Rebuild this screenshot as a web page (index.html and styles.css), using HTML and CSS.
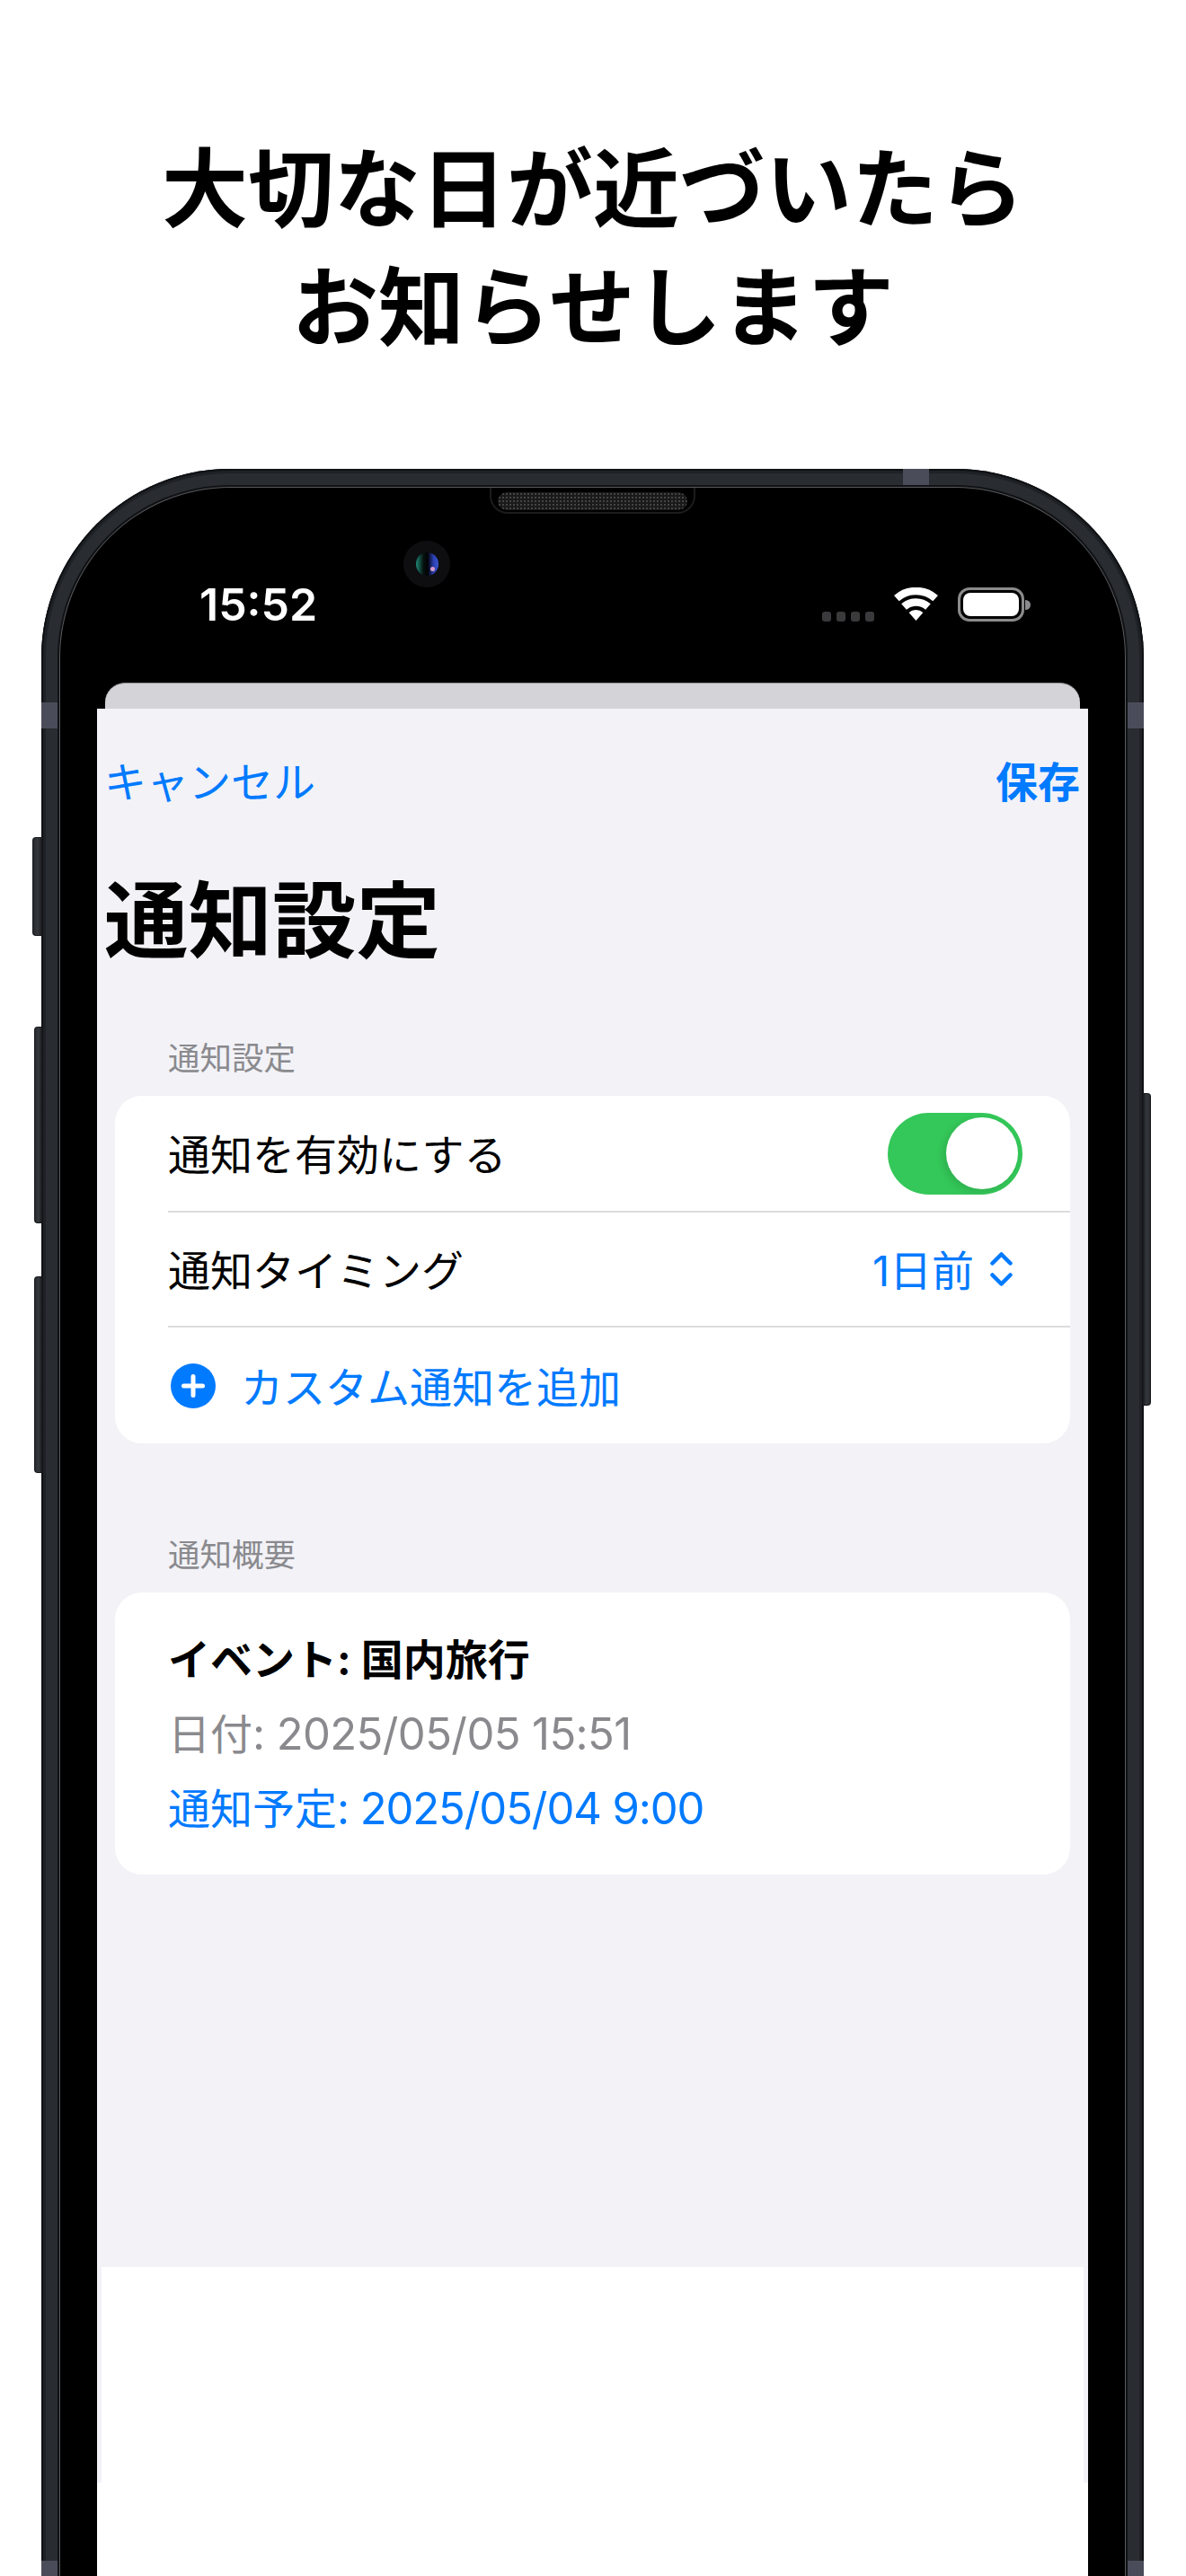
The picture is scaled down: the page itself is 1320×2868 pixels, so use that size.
FILE: index.html
```html
<!DOCTYPE html>
<html lang="ja">
<head>
<meta charset="utf-8">
<title>通知設定</title>
<link rel="stylesheet" href="styles.css">
</head>
<body>
<header class="headline">
  <h1 class="headline-text">大切な日が近づいたら<br>お知らせします</h1>
</header>
<div class="phone">
  <span class="side-btn btn-action"></span>
  <span class="side-btn btn-vol-up"></span>
  <span class="side-btn btn-vol-down"></span>
  <span class="side-btn btn-power"></span>
  <span class="band band-top"></span>
  <span class="band band-left"></span>
  <span class="band band-right"></span>
  <span class="band band-bottom-left"></span>
  <span class="band band-bottom-right"></span>
  <div class="bezel">
    <div class="notch"><div class="speaker"></div></div>
    <div class="camera"><div class="lens"></div></div>
    <div class="status-bar">
      <span class="time">15:52</span>
      <div class="status-icons">
        <div class="signal"><i></i><i></i><i></i><i></i></div>
        <svg class="wifi" width="49" height="38" viewBox="0 0 49 38">
          <path class="wifi-arc" d="M2.85 12.1A33 33 0 0 1 46.15 12.1"/>
          <path class="wifi-arc" d="M11.05 21.5A20.5 20.5 0 0 1 37.95 21.5"/>
          <path class="wifi-core" d="M24.5 37L16.6 27.9A12 12 0 0 1 32.4 27.9Z"/>
        </svg>
        <div class="battery"><div class="battery-fill"></div></div>
      </div>
    </div>
    <div class="back-sheet"></div>
    <main class="screen">
      <div class="sheet">
        <nav class="nav">
          <span class="nav-cancel">キャンセル</span>
          <span class="nav-save">保存</span>
        </nav>
        <h2 class="title">通知設定</h2>
        <div class="section-label">通知設定</div>
        <section class="card">
          <div class="row row-first">
            <span class="row-text">通知を有効にする</span>
            <div class="toggle"><div class="knob"></div></div>
          </div>
          <div class="row row-second">
            <span class="row-text">通知タイミング</span>
            <div class="picker">
              <span class="row-text">1日前</span>
              <svg class="chevrons" width="25" height="38" viewBox="0 0 25 38">
                <path d="M2.5 12.5L12.5 2.5L22.5 12.5"/>
                <path d="M2.5 25.5L12.5 35.5L22.5 25.5"/>
              </svg>
            </div>
          </div>
          <div class="row row-add">
            <svg class="plus" width="50" height="50" viewBox="0 0 50 50">
              <circle class="plus-disc" cx="25" cy="25" r="25"/>
              <path class="plus-mark" d="M25 14.5V35.5M14.5 25H35.5"/>
            </svg>
            <span class="row-text add-text">カスタム通知を追加</span>
          </div>
        </section>
        <div class="section-label section-label-2">通知概要</div>
        <section class="card summary">
          <div class="sum-line sum-event">イベント: 国内旅行</div>
          <div class="sum-line sum-date">日付<span class="num">: 2025/05/05 15:51</span></div>
          <div class="sum-line sum-plan">通知予定<span class="num">: 2025/05/04 9:00</span></div>
        </section>
        <div class="blank"></div>
      </div>
    </main>
  </div>
</div>
</body>
</html>
```

FILE: styles.css
```css
* { box-sizing: border-box; }
html, body { margin: 0; padding: 0; }
body {
  width: 1320px;
  height: 2868px;
  overflow: hidden;
  background: #fff;
  color: #000;
  font-family: Inter, "Noto Sans CJK JP", sans-serif;
}

.headline { padding-top: 138px; text-align: center; }
.headline-text {
  margin: 0;
  font-size: 96px;
  line-height: 132px;
  font-weight: 700;
  font-family: "Noto Sans CJK JP", sans-serif;
}

.phone {
  position: relative;
  width: 1227px;
  height: 2346px;
  margin: 120px 0 0 46px;
  padding: 21px 21px 0;
  border-radius: 210px 210px 0 0;
  background: #292c30;
  box-shadow: inset 0 0 0 2px #101215, inset 0 0 0 5px #1e2125;
}
.side-btn {
  position: absolute;
  background: linear-gradient(90deg, #26292d, #35383c 50%, #17191c);
  border: 1px solid #16181b;
  border-right: 0;
  border-radius: 4px 0 0 4px;
}
.btn-action { left: -10px; top: 410px; width: 11px; height: 110px; }
.btn-vol-up { left: -8px; top: 621px; width: 9px; height: 219px; }
.btn-vol-down { left: -8px; top: 899px; width: 9px; height: 219px; }
.btn-power {
  left: 1226px; top: 695px; width: 9px; height: 348px;
  border: 1px solid #16181b; border-left: 0;
  border-radius: 0 4px 4px 0;
  background: linear-gradient(90deg, #17191c, #35383c 50%, #26292d);
}
.band { position: absolute; background: #4a4c5a; }
.band-top { left: 959px; top: 0; width: 29px; height: 21px; }
.band-left { left: 0; top: 260px; width: 21px; height: 29px; }
.band-right { right: 0; top: 260px; width: 21px; height: 29px; }
.band-bottom-left { left: 0; top: 2329px; width: 21px; height: 17px; }
.band-bottom-right { right: 0; top: 2329px; width: 21px; height: 17px; }

.bezel {
  position: relative;
  height: 2325px;
  padding: 0 41px;
  background: #000;
  border-radius: 189px 189px 0 0;
  box-shadow: 0 0 0 1px #58595b, 0 0 0 3px #101215;
}
.notch {
  position: absolute;
  left: 478px; top: 0;
  width: 229px; height: 29px;
  padding: 5px 7px 0;
  border: 2px solid #1c1c1e;
  border-top: 0;
  border-radius: 0 0 20px 20px;
  background: #000;
}
.speaker {
  height: 20px;
  border-radius: 10px;
  background-color: #1a1a1b;
  background-image: radial-gradient(circle, #444 1px, transparent 1.3px);
  background-size: 4px 4px;
}
.camera {
  position: absolute;
  left: 382px; top: 59px;
  width: 52px; height: 52px;
  display: flex; align-items: center; justify-content: center;
  border-radius: 50%;
  background: #0e0e10;
}
.lens {
  position: relative;
  width: 25px; height: 26px;
  border-radius: 50%;
  background: linear-gradient(90deg, #1f8a78, #06130f 32%, #020204 52%, #2a3fb0 78%, #3a55d0);
}
.lens::after {
  content: "";
  position: absolute;
  right: 4px; bottom: 5px;
  width: 5px; height: 5px;
  border-radius: 50%;
  background: #d89ac8;
}

.status-bar {
  display: flex;
  justify-content: space-between;
  align-items: flex-start;
  height: 217px;
  padding: 111px 71px 0 114px;
}
.time {
  font-size: 50px;
  line-height: 38px;
  font-weight: 600;
  color: #fff;
}
.status-icons { display: flex; align-items: flex-end; }
.signal { display: flex; gap: 6px; margin-right: 22px; }
.signal i {
  display: block;
  width: 10px; height: 11px;
  border-radius: 3px;
  background: #3a3a3c;
}
.wifi { display: block; margin-right: 22px; }
.wifi-arc { fill: none; stroke: #fff; stroke-width: 8.5; }
.wifi-core { fill: #fff; }
.battery {
  position: relative;
  width: 74px; height: 38px;
  padding: 3px;
  border: 3px solid #8b8b8d;
  border-radius: 13px;
}
.battery::after {
  content: "";
  position: absolute;
  left: 72px; top: 11px;
  width: 6px; height: 11px;
  border-radius: 0 6px 6px 0;
  background: #8b8b8d;
}
.battery-fill { height: 100%; border-radius: 8px; background: #fff; }

.back-sheet {
  height: 29px;
  margin: 0 9px;
  background: #d4d3d8;
  border-top: 1px solid #8f8f92;
  border-radius: 22px 22px 0 0;
}
.screen {
  height: 2079px;
  width: 1103px;
  background: #fff;
}
.sheet {
  display: flex;
  flex-direction: column;
  height: 1975px;
  background: #f2f2f7;
}
.nav {
  display: flex;
  justify-content: space-between;
  padding: 52px 9px 0 8px;
  font-size: 47px;
  line-height: 60px;
  color: #007aff;
}
.nav-save { font-weight: 700; }
.title {
  margin: 69px 0 0 8px;
  font-size: 93.5px;
  line-height: 110px;
  font-weight: 700;
}
.section-label {
  margin: 74px 0 16px 79px;
  font-size: 35.5px;
  line-height: 50px;
  color: #8a8a8e;
}
.section-label-2 { margin-top: 100px; margin-bottom: 16px; }
.card {
  width: 1063px;
  margin-left: 20px;
  background: #fff;
  border-radius: 30px;
}
.row {
  display: flex;
  align-items: center;
  justify-content: space-between;
  margin-left: 59px;
  font-size: 47px;
}
.row-text { padding-bottom: 3px; }
.row-first { height: 128px; padding-right: 53px; }
.row-second {
  height: 130px;
  padding-right: 64px;
  border-top: 2px solid #dcdcde;
  border-bottom: 2px solid #dcdcde;
}
.row-add { height: 129px; justify-content: flex-start; padding-left: 3px; }
.toggle {
  display: flex;
  justify-content: flex-end;
  align-items: center;
  width: 150px; height: 91px;
  padding-right: 5px;
  border-radius: 46px;
  background: #34c759;
}
.knob {
  width: 80px; height: 80px;
  border-radius: 50%;
  background: #fff;
  box-shadow: -3px 3px 8px rgba(0, 0, 0, .12);
}
.picker { display: flex; align-items: center; gap: 18px; color: #007aff; }
.chevrons { display: block; }
.chevrons path { fill: none; stroke: #007aff; stroke-width: 4.5; stroke-linecap: round; stroke-linejoin: round; }
.plus { display: block; }
.plus-disc { fill: #007aff; }
.plus-mark { fill: none; stroke: #fff; stroke-width: 5; stroke-linecap: round; }
.add-text { margin-left: 28px; color: #007aff; }
.summary { height: 314px; padding: 45px 0 0 59px; }
.sum-line { font-size: 47px; line-height: 60px; margin-bottom: 23px; }
.num { font-size: 49px; letter-spacing: -.6px; }
.sum-event { font-weight: 700; }
.sum-date { color: #8a8a8e; }
.sum-plan { color: #007aff; }
.sum-plan .num { letter-spacing: -1.1px; }
.blank {
  margin: auto 5px 0 5px;
  height: 240px;
  background: #fff;
}
```
